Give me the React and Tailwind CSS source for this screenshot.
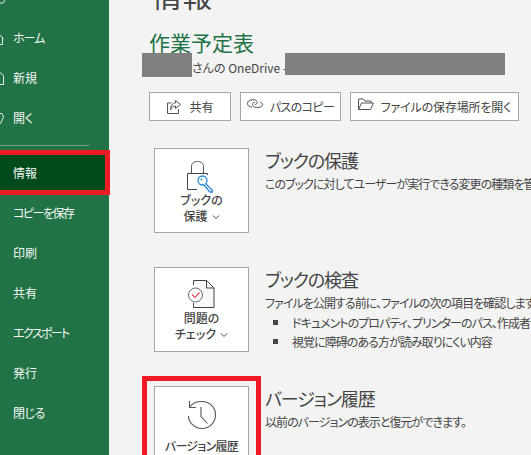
import React from "react";

const FONT = "font-['Noto_Sans_CJK_JP','Noto_Sans',sans-serif] [font-feature-settings:'palt']";

const Chevron = () => (
  <svg width="8" height="6" viewBox="0 0 8 6" fill="none" stroke="#444" strokeWidth="1" className="inline-block ml-1 mb-px">
    <path d="M1 1.5 L4 4.5 L7 1.5" />
  </svg>
);

const HomeIcon = () => (
  <svg width="13" height="13" viewBox="0 0 13 13" fill="none" stroke="#e4eee8" strokeWidth="1" className="shrink-0 -ml-[9px] mr-[9px]">
    <path d="M0.5 6.5 L6.5 1 L12.5 6.5 M2 6 V12.5 H11.5 V6" />
  </svg>
);

const NewIcon = () => (
  <svg width="13" height="13" viewBox="0 0 13 13" fill="none" stroke="#e4eee8" strokeWidth="1" className="shrink-0 -ml-[9px] mr-[9px]">
    <path d="M2.5 0.5 H9 L12.5 3.5 V12.5 H2.5 Z" />
  </svg>
);

const OpenIcon = () => (
  <svg width="13" height="13" viewBox="0 0 13 13" fill="none" stroke="#e4eee8" strokeWidth="1" className="shrink-0 -ml-[9px] mr-[9px]">
    <path d="M1 3.5 H6 L8 1.5 H11 L12.5 5 L9.5 11.5 H6" />
  </svg>
);

const ShareIcon = () => (
  <svg width="16" height="16" viewBox="0 0 16 16" fill="none" stroke="#555" strokeWidth="1">
    <path d="M5.5 4 H1.5 V14.5 H12.5 V10" />
    <path d="M9.5 1.5 L14.5 5.5 L9.5 9.5 V7 C7 7 5.5 8 4.5 11 C4.5 7 6.5 4 9.5 4 Z" />
  </svg>
);

const LinkIcon = () => (
  <svg width="16" height="12" viewBox="0 0 16 12" fill="none" stroke="#555" strokeWidth="1" className="mb-1">
    <path d="M5 8 C2.5 8 0.5 6.8 0.5 4.5 C0.5 2.2 2.5 0.8 5 0.8 H7 C9 0.8 10.2 2 10.2 3.4 C10.2 4.8 9 5.6 7.8 5.6" />
    <path d="M7.8 3.2 C6.5 3.2 5.6 4 5.6 5.2 C5.6 7 7 8.4 9.5 8.4 H11 C13.6 8.4 15.5 7.4 15.5 5.6 C15.5 4.4 14.4 3.6 13 3.4" />
  </svg>
);

const FolderIcon = () => (
  <svg width="16" height="13" viewBox="0 0 16 13" fill="none" stroke="#555" strokeWidth="1" className="mb-1">
    <path d="M0.5 11.5 V1 H5.5 L7 3 H13 V5" />
    <path d="M0.5 11.5 H12.5 L15.5 5 H3.5 Z" />
  </svg>
);

const LockIcon = () => (
  <svg width="32" height="34" viewBox="0 0 32 34" fill="none">
    <path d="M5.5 13 V6.5 C5.5 3 8 1.5 11.5 1.5 C15 1.5 17.5 3 17.5 6.5 V13" stroke="#555" />
    <path d="M11 29.5 H1.5 V13.5 H21.5 V15" stroke="#444" />
    <circle cx="16.5" cy="20.5" r="4.5" fill="#fff" stroke="#2b88d8" strokeWidth="1.3" />
    <path d="M19.5 23.5 L26.5 30.5 V32 H24 L22.5 30.5 L21.5 29 L17.5 24.5" fill="#fff" stroke="#2b88d8" strokeWidth="1.3" />
    <circle cx="15.5" cy="19.5" r="1" fill="#2b88d8" />
  </svg>
);

const InspectIcon = () => (
  <svg width="30" height="30" viewBox="0 0 30 30" fill="none">
    <path d="M6.5 6 V1.5 H19.5 L27 9 V28.5 H6.5 V24" fill="#fafafa" stroke="#444" />
    <path d="M19.5 1.5 V9 H27" stroke="#444" />
    <circle cx="8.5" cy="16" r="7" fill="#fff" stroke="#666" />
    <path d="M5 15.5 L8 18.5 L12.5 13.5" stroke="#e8505b" strokeWidth="1.2" />
  </svg>
);

const HistoryIcon = () => (
  <svg width="30" height="30" viewBox="0 0 30 30" fill="none" stroke="#555" strokeWidth="1.1">
    <path d="M3 6.5 C5.5 3.2 9.5 1.5 15 1.5 C22.5 1.5 28.5 7.5 28.5 15 C28.5 22.5 22.5 28.5 15 28.5 C7.5 28.5 1.5 22.5 1.5 16" />
    <path d="M2.5 1 V7.5 H9" />
    <path d="M14 7 V16.5 L20.5 23.5" />
  </svg>
);

const NavRow = ({ label, icon, tight = "" }) => (
  <div className={`h-10 flex items-center text-[12px] text-[#f4f8f5] whitespace-nowrap ${icon ? "" : "pl-[13px]"}`}>
    {icon}
    <span className={tight}>{label}</span>
  </div>
);

const ActionButton = ({ icon, label, className }) => (
  <button className={`h-[29px] flex items-center justify-center gap-[7px] bg-white border border-[#a6a6a6] text-[12px] text-[#444] whitespace-nowrap ${className}`}>
    {icon}
    <span>{label}</span>
  </button>
);

const Section = ({ card, title, children, className = "" }) => (
  <section className={`flex gap-4 pl-[5px] h-[85px] ${className}`}>
    <div className="relative w-[95px] h-[85px] shrink-0 bg-white border border-[#a6a6a6] flex flex-col items-center text-center text-[12px] leading-4 font-medium text-[#444]">
      {card}
    </div>
    <div className="min-w-0 whitespace-nowrap text-[#444] tracking-[-0.95px]">
      <h2 className="text-[18px] leading-6 font-normal tracking-[-1.1px] mb-[3px]">{title}</h2>
      {children}
    </div>
  </section>
);

const Bullet = ({ children }) => (
  <div className="h-[19px] flex items-center text-[12px]">
    <span className="w-[5px] h-[5px] bg-[#444] ml-2 mr-[14px] shrink-0" />
    <span>{children}</span>
  </div>
);

export default function App() {
  return (
    <div className={`w-[531px] h-[455px] overflow-hidden flex bg-[#f3f3f3] ${FONT}`}>
      <aside className="w-[109px] shrink-0 bg-[#217346] relative z-10">
        <div className="h-[18px]">
          <svg width="6" height="4" viewBox="0 0 6 4" fill="none" stroke="#e4eee8">
            <path d="M0 3 H3 L5 0" />
          </svg>
        </div>
        <NavRow label="ホーム" icon={<HomeIcon />} tight="tracking-[-1px]" />
        <NavRow label="新規" icon={<NewIcon />} />
        <NavRow label="開く" icon={<OpenIcon />} />
        <div className="w-[89px] h-px bg-[#6fa386] mt-[7px] mb-[7px]" />
        <div className="relative">
          <div className="bg-[#004b1c]">
            <NavRow label="情報" />
          </div>
          <div className="absolute -left-[6px] -right-px -top-[3px] -bottom-[2px] border-[5px] border-[#ed1c24]" />
        </div>
        <NavRow label="コピーを保存" tight="tracking-[-1.5px]" />
        <NavRow label="印刷" />
        <NavRow label="共有" />
        <NavRow label="エクスポート" tight="tracking-[-1.6px]" />
        <NavRow label="発行" />
        <NavRow label="閉じる" tight="tracking-[-0.4px]" />
      </aside>

      <main className="flex-1 min-w-0 overflow-hidden pl-10">
        <h1 className="-mt-[21px] h-[30px] pl-[3px] text-[30px] leading-[30px] font-normal text-[#444]">情報</h1>
        <div className="mt-[22px] h-[22px] text-[21px] leading-[22px] text-[#217346] whitespace-nowrap">作業予定表</div>
        <div className="flex items-start -ml-[7px] h-6 text-[12px] text-[#444] whitespace-nowrap">
          <div className="w-[50px] h-6 bg-[#808080] shrink-0" />
          <span className="leading-[30px] w-[93px] shrink-0">さんの OneDrive -</span>
          <div className="w-[220px] h-[22px] bg-[#808080] shrink-0" />
        </div>

        <div className="flex gap-[9px] mt-[15px]">
          <ActionButton className="w-[82px]" icon={<ShareIcon />} label="共有" />
          <ActionButton className="w-[101px] tracking-[-0.6px]" icon={<LinkIcon />} label="パスのコピー" />
          <ActionButton className="w-[169px] tracking-[-0.15px]" icon={<FolderIcon />} label="ファイルの保存場所を開く" />
        </div>

        <div className="mt-[27px] flex flex-col gap-[34px]">
          <Section
            title="ブックの保護"
            card={
              <>
                <div className="mt-[11px] h-[32px]"><LockIcon /></div>
                <div>ブックの</div>
                <div>保護<Chevron /></div>
              </>
            }
          >
            <p className="text-[12px] leading-[18px]">このブックに対してユーザーが実行できる変更の種類を管理します。</p>
          </Section>

          <Section
            title="ブックの検査"
            card={
              <>
                <div className="mt-[11px] h-[31px]"><InspectIcon /></div>
                <div>問題の</div>
                <div>チェック<Chevron /></div>
              </>
            }
          >
            <p className="text-[12px] leading-[18px] mb-px">ファイルを公開する前に、ファイルの次の項目を確認します。</p>
            <Bullet>ドキュメントのプロパティ、プリンターのパス、作成者の名前</Bullet>
            <Bullet>視覚に障碍のある方が読み取りにくい内容</Bullet>
          </Section>

          <Section
            title="バージョン履歴"
            card={
              <>
                <div className="mt-[13px] h-[38px]"><HistoryIcon /></div>
                <div className="tracking-[-0.7px]">バージョン履歴</div>
                <div className="absolute -left-[13px] -right-[13px] -top-[11px] h-[200px] border-[5px] border-[#ed1c24]" />
              </>
            }
          >
            <p className="text-[12px] leading-[18px]">以前のバージョンの表示と復元ができます。</p>
          </Section>
        </div>
      </main>
    </div>
  );
}
